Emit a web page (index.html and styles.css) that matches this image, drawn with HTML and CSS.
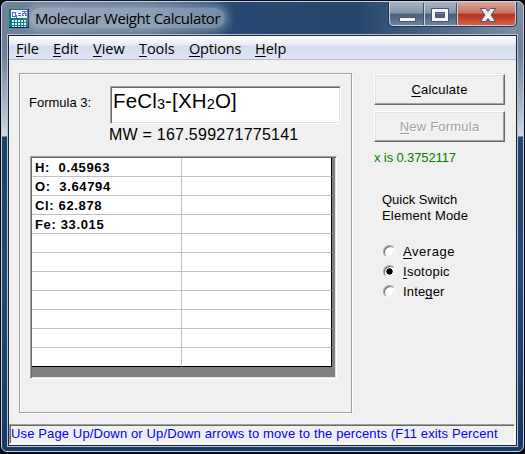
FILE: index.html
```
<!DOCTYPE html>
<html lang="en">
<head>
<meta charset="utf-8">
<title>Molecular Weight Calculator</title>
<link rel="stylesheet" href="styles.css">
</head>
<body>
<div class="window">
  <header class="titlebar">
    <svg class="app-icon" width="20" height="19" viewBox="0 0 20 19" shape-rendering="crispEdges">
      <path fill="#087b7b" d="M0 0h20v19H0z"/>
      <path fill="#001060" d="M19 0h1v19H0v-1h19z"/>
      <path fill="#fff" d="M2 1h16v8H2z"/>
      <path fill="none" stroke="#5a5aec" d="M3 3.500h3v4H3zM7.500 6v3M9 4.500h3M9 6.500h3M13 2.500h2v2h-2v2h2M16 2.500h2v2h-2v2h2"/>
      <path fill="none" stroke="#e8f4ee" stroke-width="2" stroke-dasharray="2 1" d="M3 12h14M3 15h14"/>
      <path fill="none" stroke="#e8f4ee" stroke-dasharray="2 1" d="M3 17.500h14"/>
    </svg>
    <span class="title">Molecular Weight Calculator</span>
    <div class="controls">
      <svg width="130" height="25" viewBox="0 0 130 25">
        <defs>
          <linearGradient id="glass" x2="0" y2="1"><stop offset="0" stop-color="#a9b4c3"/><stop offset=".47" stop-color="#8492a6"/><stop offset=".5" stop-color="#465d7b"/><stop offset="1" stop-color="#7389a2"/></linearGradient>
          <linearGradient id="red" x2="0" y2="1"><stop offset="0" stop-color="#dca79b"/><stop offset=".47" stop-color="#c76f61"/><stop offset=".5" stop-color="#b62f1b"/><stop offset="1" stop-color="#d6654c"/></linearGradient>
        </defs>
        <path fill="url(#glass)" d="M1 0h69v24H5q-4 0-4-4z"/>
        <path fill="url(#red)" d="M70 0h58v20q0 4-4 4H70z"/>
        <path fill="none" stroke="#23364f" d="M.5 0v20q0 4.500 4.500 4.500h119q4.500 0 4.500-4.500V0"/>
        <path fill="none" stroke="#cbd3dd" d="M1.500 0v19q0 4.500 4 4.500h118q4 0 4-4.500V0M36.500 1v22M69.500 1v22"/>
        <path stroke="#40506a" d="M35.500 1v22M68.500 1v22"/>
        <path fill="#f5f5f5" stroke="#4b566a" d="M11.500 15.500h16v4h-16z"/>
        <path fill="#f3f3f3" stroke="#4b566a" fill-rule="evenodd" d="M43.500 6.500h17v13h-17zM47.500 10.500v5h9v-5z"/>
        <path fill="#f5f5f5" stroke="#4b566a" d="M92.500 6.500h5l2.500 3 2.500-3h5l-4.500 6.500 4.500 6.500h-5l-2.500-3-2.500 3h-5l4.500-6.500z"/>
      </svg>
    </div>
  </header>
  <div class="client">
    <nav class="menu">
      <span class="m-file"><u>F</u>ile</span><span class="m-edit"><u>E</u>dit</span><span class="m-view"><u>V</u>iew</span><span class="m-tools"><u>T</u>ools</span><span class="m-options"><u>O</u>ptions</span><span class="m-help"><u>H</u>elp</span>
    </nav>
    <main class="content">
      <section class="group">
        <div class="formula-row">
          <label class="formula-label">Formula 3:</label>
          <div class="formula-box">FeCl<small>3</small>-[XH<small>2</small>O]</div>
        </div>
        <div class="weight">MW = 167.599271775141</div>
        <div class="grid-frame">
          <div class="grid">
            <div>H:&nbsp; 0.45963</div><div></div>
            <div>O:&nbsp; 3.64794</div><div></div>
            <div>Cl: 62.878</div><div></div>
            <div>Fe: 33.015</div><div></div>
            <div></div><div></div>
            <div></div><div></div>
            <div></div><div></div>
            <div></div><div></div>
            <div></div><div></div>
            <div></div><div></div>
            <div></div><div></div>
          </div>
        </div>
      </section>
      <aside class="side">
        <div class="button"><span><u>C</u>alculate</span></div>
        <div class="button disabled"><span><u>N</u>ew Formula</span></div>
        <div class="solution">x is 0.3752117</div>
        <div class="mode-title"><span>Quick Switch</span><br><span class="element">Element Mode</span></div>
        <div class="option"><i class="radio"></i><span class="o-avg"><u>A</u>verage</span></div>
        <div class="option"><i class="radio on"></i><span><u>I</u>sotopic</span></div>
        <div class="option"><i class="radio"></i><span class="o-int">Inte<u>g</u>er</span></div>
      </aside>
    </main>
    <footer class="status"><span>Use Page Up/Down or Up/Down arrows to move to the percents (F11 exits Percent</span></footer>
  </div>
</div>
</body>
</html>
```
FILE: styles.css
```
* { box-sizing: border-box; }
body {
  margin: 0;
  width: 525px;
  height: 454px;
  overflow: hidden;
  background: #020914;
  padding: 1px 1px 2px;
  font: 13px/16px "Liberation Sans", Arial, sans-serif;
  color: #000;
}
u { text-decoration: underline; text-decoration-thickness: 1px; text-underline-offset: 2px; text-decoration-skip-ink: none; }
.window {
  height: 451px;
  border: 1px solid #c4d0de;
  border-radius: 6px;
  padding: 0 5px 4px;
  background:
    linear-gradient(#728299 0, #6d8099 50px, #d0d8e2 134px, #1e3f68 135px, #254770 280px, #193b63 430px) 0 0 / 7px 100% no-repeat,
    linear-gradient(#8292a8 0, #6d8099 50px, #d0d8e2 134px, #25466c 135px, #234a78 280px, #193b63 430px) 100% 0 / 7px 100% no-repeat,
    linear-gradient(90deg, #728299 0, #5d7391 28%, #264a72 43%, #25466c 68%, #536d8b 86%, #8292a8 100%) 0 0 / 100% 33px no-repeat,
    #193b63;
}
.titlebar {
  height: 32px;
  display: flex;
  align-items: flex-start;
  padding-left: 2px;
}
.app-icon { margin-top: 7px; flex: none; }
.title {
  margin: 6px 0 0 1px;
  padding: 0 5px;
  font: 15px/20px "Open Sans", "Noto Sans", sans-serif;
  letter-spacing: -.42px;
  white-space: nowrap;
  border-radius: 10px;
  background: rgba(190, 203, 218, .5);
  box-shadow: 0 0 10px 3px rgba(190, 203, 218, .5);
}
.controls { margin-left: auto; height: 25px; }
.controls svg { display: block; }
.client {
  height: 413px;
  border: 1px solid #b4c3d2;
  background: #f0f0f0;
  box-shadow: inset 0 0 0 1px #14273e;
  padding: 1px 1px 2px;
  display: flex;
  flex-direction: column;
}
.menu {
  height: 24px;
  flex: none;
  display: flex;
  padding-left: 7px;
  font: 14.500px/24px "Open Sans", "Noto Sans", sans-serif;
  background: linear-gradient(#fff 0, #e7ebf5 9px, #d5dced 10px, #dee4f4 23px);
  border-bottom: 1px solid #b5bbd0;
}
.menu span { white-space: nowrap; padding-top: 1px; line-height: 23px; }
.m-file { width: 37px; }
.m-edit { width: 40px; letter-spacing: -.1px; }
.m-view { width: 46px; }
.m-tools { width: 50px; letter-spacing: -.1px; }
.m-options { width: 66px; letter-spacing: -.2px; }
.content { flex: 1; min-height: 0; display: flex; padding: 13px 10px 0 10px; }
.group {
  width: 333px;
  height: 340px;
  flex: none;
  border: 1px solid #a0a0a0;
  box-shadow: inset 1px 1px #fff, 1px 1px #fff;
  padding: 12px 0 0 10px;
}
.formula-row { display: flex; }
.formula-label { width: 80px; padding-top: 9px; margin-left: -1px; margin-right: 1px; white-space: nowrap; }
.formula-box {
  width: 231px;
  height: 38px;
  background: #fff;
  border: 1px solid;
  border-color: #a0a0a0 #fff #fff #a0a0a0;
  box-shadow: inset 1px 1px #696969, inset -1px -1px #e3e3e3;
  padding: 2px 0 0 2px;
  font-size: 20.500px;
  letter-spacing: .15px;
  line-height: 24px;
  white-space: nowrap;
}
.formula-box small { font-size: 14.500px; line-height: 1; vertical-align: -1px; }
.weight { margin: 1px 0 0 79px; font-size: 16px; line-height: 19px; letter-spacing: .23px; white-space: nowrap; }
.grid-frame {
  width: 307px;
  height: 223px;
  margin-top: 12px;
  background: #808080;
  border: 1px solid;
  border-color: #a0a0a0 #fff #fff #a0a0a0;
  box-shadow: inset 1px 1px #696969, inset -1px -1px #e3e3e3;
  padding: 1px;
}
.grid {
  width: 300px;
  height: 209px;
  display: grid;
  grid-template-columns: 150px 150px;
  grid-auto-rows: 19px;
  background: #fff;
  font-weight: bold;
}
.grid div { border: 0 solid #c0c0c0; border-width: 0 1px 1px 0; padding-left: 3px; line-height: 19px; letter-spacing: .65px; white-space: nowrap; }
.grid div:nth-child(even) { border-right-color: #000; }
.grid div:nth-last-child(-n+2) { border-bottom-color: #000; }
.side { margin-left: 22px; padding-top: 1px; width: 131px; display: flex; flex-direction: column; }
.button {
  width: 131px;
  height: 31px;
  flex: none;
  margin-bottom: 6px;
  border: 1px solid;
  border-color: #fff #696969 #696969 #fff;
  box-shadow: inset -1px -1px #a0a0a0, inset 1px 1px #e3e3e3;
  text-align: center;
  line-height: 29px;
  letter-spacing: .22px;
}
.disabled { color: #a0a0a0; text-shadow: 1px 1px #fff; }
.solution { margin-top: 2px; color: #008000; letter-spacing: -.12px; white-space: nowrap; }
.mode-title { margin: 26px 0 20px 8px; white-space: nowrap; }
.element { letter-spacing: .2px; }
.option { height: 20px; line-height: 16px; margin-left: 9px; display: flex; }
.option span { white-space: nowrap; letter-spacing: .25px; }
.option .o-avg { letter-spacing: .55px; }
.option .o-int { letter-spacing: .15px; }
.radio {
  width: 13px;
  height: 13px;
  margin: 1px 7px 0 0;
  border-radius: 50%;
  background: #fff;
  border: 1px solid;
  border-color: #a0a0a0 #fff #fff #a0a0a0;
  box-shadow: inset 1px 1px #696969, inset -1px -1px #e3e3e3;
}
.on { background: radial-gradient(circle at 50% 50%, #000 0 2.800px, #fff 3.500px); }
.status {
  height: 20px;
  flex: none;
  width: 506px;
  border: 1px solid;
  border-color: #a0a0a0 #fff #fff #a0a0a0;
  box-shadow: inset 1px 1px #696969;
  padding: 0 0 0 1px;
  color: #00f;
  line-height: 18px;
  letter-spacing: .13px;
  white-space: nowrap;
}
```
